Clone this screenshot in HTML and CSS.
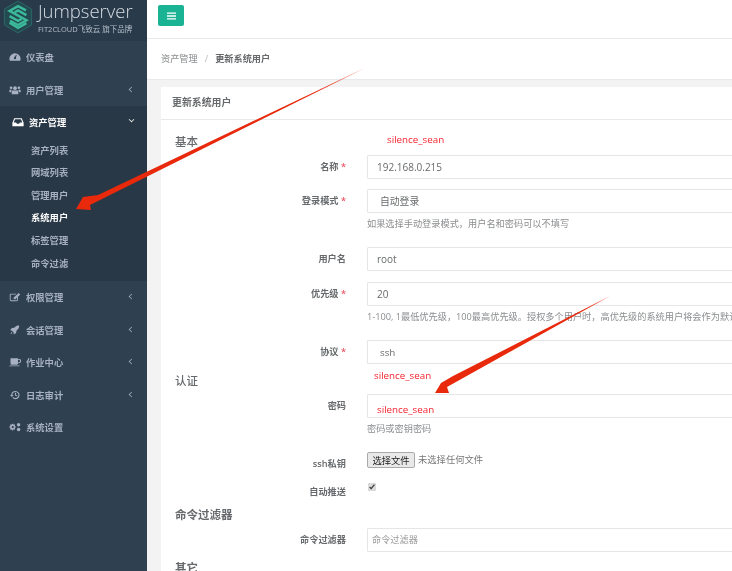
FILE: index.html
```html
<!DOCTYPE html>
<html lang="zh">
<head>
<meta charset="utf-8">
<title>更新系统用户</title>
<link rel="stylesheet" href="styles.css">
</head>
<body>
<div class="app">
  <aside class="sidebar">
    <div class="brand">
      <svg class="brand-logo" viewBox="0 0 32 36">
        <path class="hex" d="M16 1 30.500 9.500V26.500L16 35 1.500 26.500V9.500Z"/>
        <path class="s" d="M24.500 11 16 6.500 7 11.500 25 21.500 16 26.500 7.500 22"/>
        <path class="s" d="M7 17 16 22 20 20M25 16 16 11 12.500 13M7 24 16 29.500 25 24.500"/>
      </svg>
      <div class="brand-text">
        <div class="brand-name">Jumpserver</div>
        <div class="brand-sub">FIT2CLOUD飞致云 旗下品牌</div>
      </div>
    </div>
    <nav>
      <a class="nav-item"><svg class="ico" viewBox="0 0 16 12"><path d="M8 1a7.500 7.500 0 0 0-7.500 7.500c0 1 .3 2 .8 2.500h13.400c.5-.5.8-1.500.8-2.500A7.500 7.500 0 0 0 8 1Zm0 8a1.500 1.500 0 0 1-.6-2.900L9.500 3l.8.3-1 3.500A1.500 1.500 0 0 1 8 9Z"/></svg><span>仪表盘</span></a>
      <a class="nav-item"><svg class="ico" viewBox="0 0 16 12"><circle cx="8" cy="3.500" r="2.500"/><circle cx="2.800" cy="3" r="1.800"/><circle cx="13.200" cy="3" r="1.800"/><path d="M4 6.500h8l.5 5h-9ZM.5 5.500h3L3 9H.5ZM12.500 5.500h3V9H13Z"/></svg><span>用户管理</span><i class="chev"></i></a>
      <div class="nav-open">
        <a class="nav-item active"><svg class="ico" viewBox="0 0 16 12"><path d="M3 1h10l2.500 6v4.500H.5V7Zm1 1.300L2.300 6.500h3.200l1 1.700h3l1-1.700h3.200L12 2.300Z"/></svg><span>资产管理</span><i class="chev down"></i></a>
        <ul class="sub">
          <li>资产列表</li>
          <li>网域列表</li>
          <li>管理用户</li>
          <li class="current">系统用户</li>
          <li>标签管理</li>
          <li>命令过滤</li>
        </ul>
      </div>
      <a class="nav-item"><svg class="ico" viewBox="0 0 16 12"><path d="M2.500 1.500H10L9 2.700H3a.8.800 0 0 0-.8.800v6c0 .4.400.8.800.8h7c.4 0 .8-.4.800-.8V7L12 5.800v4a1.700 1.700 0 0 1-1.700 1.700H2.700A1.700 1.700 0 0 1 1 9.800V3a1.500 1.500 0 0 1 1.500-1.500ZM13 .5l2 2-6.500 6.500H6.300V6.800Z"/></svg><span>权限管理</span><i class="chev"></i></a>
      <a class="nav-item"><svg class="ico" viewBox="0 0 16 12"><path d="M13.500 0c.2 2.800-.8 5-3.500 6.800l-.5 3.200-3 2-.5-3-2.500-2.300L1.500 6.200l2.300-2.800L7 3c1.800-2.200 4-3 6.500-3ZM3.300 8.500l1.500 1.400-2.800 1.700Z"/></svg><span>会话管理</span><i class="chev"></i></a>
      <a class="nav-item"><svg class="ico" viewBox="0 0 16 12"><path d="M2 1h10v1h1.500a1.500 1.500 0 0 1 0 5.500H12V8a1.500 1.500 0 0 1-1.500 1.500h-7A1.500 1.500 0 0 1 2 8Zm10 2v3.500h1a1.700 1.700 0 0 0 0-3.500ZM.5 10.500H14v1H.5Z"/></svg><span>作业中心</span><i class="chev"></i></a>
      <a class="nav-item"><svg class="ico" viewBox="0 0 16 12"><path d="M8.500.5a5.500 5.500 0 1 1-4 9.300l1.100-1.100A4 4 0 1 0 4.500 6H6L3.700 8.500 1.500 6H3A5.500 5.500 0 0 1 8.500.5ZM8 3h1.300v2.800l1.700 1-.6 1L8 6.500Z"/></svg><span>日志审计</span><i class="chev"></i></a>
      <a class="nav-item"><svg class="ico" viewBox="0 0 16 12"><path fill-rule="evenodd" d="M5.500 2.500l1 .3.700-.6 1 1-.5.800.3 1 1 .2v1.600l-1 .2-.3 1 .5.800-1 1-.7-.6-1 .3-.2 1H4.200l-.2-1-1-.3-.7.6-1-1 .5-.8-.3-1-1-.2V5.200l1-.2.3-1-.5-.8 1-1 .7.600 1-.3.2-1h1.600ZM5 4.500a1.500 1.500 0 1 0 0 3 1.500 1.500 0 0 0 0-3Z"/><circle cx="12.800" cy="3" r="2.300"/><circle cx="12.800" cy="9.200" r="2.300"/></svg><span>系统设置</span></a>
    </nav>
  </aside>

  <main class="main">
    <header class="topbar"><button class="menu-btn"><svg viewBox="0 0 10 8"><path d="M0 0h10v1.600H0zM0 3.200h10v1.600H0zM0 6.400h10V8H0z"/></svg></button></header>
    <div class="crumbs"><span>资产管理</span><span class="sep">/</span><strong>更新系统用户</strong></div>
    <section class="panel">
      <h5 class="panel-title">更新系统用户</h5>
      <form class="form">
        <div class="section first"><h3>基本</h3><span class="note">silence_sean</span></div>
        <div class="row"><label>名称 <b>*</b></label><div class="field"><div class="input">192.168.0.215</div></div></div>
        <div class="row"><label>登录模式 <b>*</b></label><div class="field"><div class="input select">自动登录</div><p class="help">如果选择手动登录模式，用户名和密码可以不填写</p></div></div>
        <div class="row wide"><label>用户名</label><div class="field"><div class="input">root</div></div></div>
        <div class="row"><label>优先级 <b>*</b></label><div class="field"><div class="input">20</div><p class="help">1-100, 1最低优先级，100最高优先级。授权多个用户时，高优先级的系统用户将会作为默认登录用户</p></div></div>
        <div class="row tight"><label>协议 <b>*</b></label><div class="field"><div class="input select">ssh</div></div></div>
        <div class="section second"><h3>认证</h3><span class="note">silence_sean</span></div>
        <div class="row"><label>密码</label><div class="field"><div class="input red">silence_sean</div><p class="help">密码或密钥密码</p></div></div>
        <div class="row file"><label>ssh私钥</label><div class="field filefield"><button type="button" class="file-btn">选择文件</button><span>未选择任何文件</span></div></div>
        <div class="row check"><label>自动推送</label><div class="field"><input type="checkbox" checked></div></div>
        <h3 class="plain">命令过滤器</h3>
        <div class="row"><label>命令过滤器</label><div class="field"><div class="input placeholder">命令过滤器</div></div></div>
        <h3 class="plain last">其它</h3>
      </form>
    </section>
  </main>

  <svg class="arrows" viewBox="0 0 732 571">
    <path d="M365 68 98 195 83 197 76 209 91 210 90 205Z"/>
    <path d="M610 296 453 376 441 383 435 393 449 393 447 387Z"/>
  </svg>
</div>
</body>
</html>
```

FILE: styles.css
```css
* { box-sizing: border-box; }
html, body { margin: 0; height: 100%; overflow: hidden; }
body { font-family: "Open Sans", "Noto Sans CJK SC", sans-serif; color: #676a6c; background: #f3f3f4; }
.app { position: relative; display: flex; width: 732px; height: 571px; overflow: hidden; filter: blur(.3px); }

.sidebar { flex: 0 0 147px; background: #2f4050; color: #a7b1c2; font-size: 9.300px; font-weight: 600; }
.brand { height: 41px; background: #293a4a; display: flex; padding: 0 0 0 3px; gap: 5px; }
.brand-logo { width: 30px; height: 34px; flex: none; }
.hex { fill: #234a50; stroke: #2c6a68; stroke-width: 1; }
.s { fill: none; stroke: #3cb99a; stroke-width: 2.600; }
.brand-text { color: #d5dce3; }
.brand-name { font-size: 18.500px; font-weight: 300; line-height: 22px; }
.brand-sub { font-size: 7.500px; font-weight: 400; line-height: 12px; color: #b4bec8; margin-top: 1px; white-space: nowrap; }

.nav-item { position: relative; display: flex; align-items: center; height: 32.500px; padding-left: 9px; }
.nav-item .ico { width: 12px; height: 10px; fill: currentColor; margin-right: 5px; flex: none; }
.chev { position: absolute; right: 13px; top: 13px; width: 5px; height: 5px; border-left: 1px solid #a7b1c2; border-bottom: 1px solid #a7b1c2; transform: rotate(45deg) scale(.8); }
.chev.down { transform: rotate(-45deg) scale(.8); top: 11px; }
.nav-open { background: #293846; height: 175px; }
.nav-item.active { color: #fff; padding-left: 12px; }
.nav-item.active .chev { border-color: #fff; }
.sub { list-style: none; margin: 0; padding: 0 0 0 31px; }
.sub li { height: 22.670px; line-height: 23px; }
.sub .current { color: #fff; }

.main { flex: 1; min-width: 0; }
.topbar { height: 39px; background: #fff; border-bottom: 1px solid #e7eaec; padding: 5px 0 0 11px; }
.menu-btn { width: 26px; height: 21px; border: 0; border-radius: 2px; background: #1ab394; padding: 0; display: flex; align-items: center; justify-content: center; }
.menu-btn svg { width: 9px; height: 8px; fill: #fff; }
.crumbs { height: 41px; background: #fff; border-bottom: 1px solid #e7eaec; display: flex; align-items: center; padding: 0 0 2px 14px; font-size: 9.200px; gap: 7px; }
.crumbs span { color: #8b8d8f; }
.crumbs .sep { color: #b5b7b9; }
.crumbs strong { font-weight: 600; color: #676a6c; }

.panel { margin: 7px 0 0 14px; background: #fff; }
.panel-title { margin: 0; height: 33px; border-bottom: 1px solid #e7eaec; padding-left: 11px; line-height: 31px; font-size: 9.900px; font-weight: 600; }
.form { padding-left: 14px; }
h3 { margin: 0; font-size: 11.500px; font-weight: 500; color: #676a6c; }
.section { display: flex; position: relative; }
.section h3 { width: 192px; }
.section.first { height: 35px; align-items: center; padding-top: 7px; }
.section.first .note { position: absolute; left: 212px; top: 13px; }
.section.second { height: 30px; align-items: flex-start; }
.section.second h3 { padding-top: 8px; }
.section.second .note { margin: 5px 0 0 7px; }
.note { font-size: 9.800px; color: #f5222d; line-height: 14px; }

.row { display: flex; margin-bottom: 10px; }
.row.wide { margin-bottom: 11px; }
.row.tight { margin-bottom: 0; }
.row label { flex: 0 0 171px; text-align: right; font-size: 9.200px; font-weight: 600; line-height: 24px; white-space: nowrap; }
.row label b { color: #ed5565; font-weight: 600; }
.field { margin-left: 21px; flex: 1; min-width: 0; }
.input { width: 400px; height: 24px; border: 1px solid #e5e6e7; border-radius: 1px; padding-left: 9px; line-height: 23px; font-size: 10px; color: #676a6c; white-space: nowrap; }
.input.select { padding-left: 12px; font-size: 9.800px; line-height: 24px; }
.input.red { color: #f5222d; font-size: 9.800px; line-height: 30px; }
.input.placeholder { color: #999; font-size: 9.200px; padding-left: 4px; line-height: 22px; }
.help { margin: 0; height: 24px; line-height: 22px; font-size: 9.200px; color: #8b8d8f; white-space: nowrap; }
.row.file { margin-bottom: 8px; height: 23px; }
.filefield { display: flex; gap: 3px; align-items: flex-start; font-size: 9.300px; color: #777; line-height: 16px; }
.file-btn { width: 48px; height: 16px; padding: 0; border: 1px solid #aaa; border-radius: 2px; background: #e9e9e9; font: inherit; color: #222; }
.row.check { height: 22px; margin-bottom: 0; }
.row.check label { margin-top: -3px; }
.row.check input { margin: 0 0 0 1px; width: 8px; height: 8px; accent-color: #dcdcdc; display: block; }
h3.plain { height: 19px; line-height: 19px; font-weight: 600; margin-bottom: 3.500px; }
h3.last { margin: -4px 0 0; }

.arrows { position: absolute; inset: 0; width: 732px; height: 571px; pointer-events: none; }
.arrows path { fill: #e8290b; }
```
